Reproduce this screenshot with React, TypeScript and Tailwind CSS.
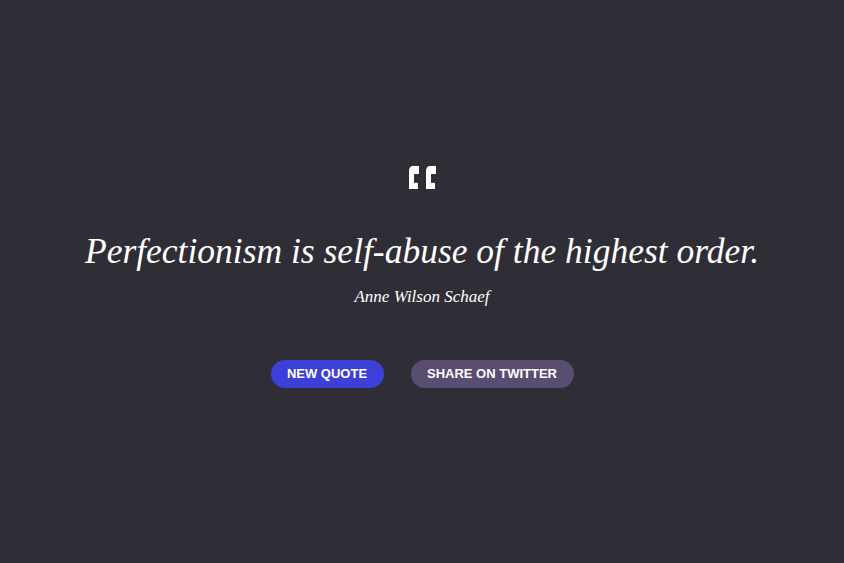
export default function App() {
  return (
    <div className="min-h-screen w-full bg-[#2f2e37] flex flex-col items-center pt-[166px]">
      <svg width="28" height="23" viewBox="0 0 28 23" className="ml-[1px]">
        <path d="M3 0H10V8H5V17Q7 16.5 9 17V23H0V5Q0 1 3 0Z" fill="#fff" />
        <path d="M20 0H27V8H22V17Q24 16.5 26 17V23H17V5Q17 1 20 0Z" fill="#fff" />
      </svg>
      <h1 className="mt-[40px] text-[35.5px] leading-[44px] italic text-white text-center font-['Liberation_Serif',serif]">
        Perfectionism is self-abuse of the highest order.
      </h1>
      <p className="mt-[13px] text-[17px] leading-[22px] italic text-white font-['Liberation_Serif',serif]">
        Anne Wilson Schaef
      </p>
      <div className="mt-[52px] flex gap-[27px] font-['Liberation_Sans',Arial,sans-serif]">
        <button className="h-[28px] w-[113px] rounded-full bg-[#3d3fd9] text-white text-[13px] font-bold">
          NEW QUOTE
        </button>
        <button className="h-[28px] w-[163px] rounded-full bg-[#594e72] text-white text-[13px] font-bold">
          SHARE ON TWITTER
        </button>
      </div>
    </div>
  );
}
